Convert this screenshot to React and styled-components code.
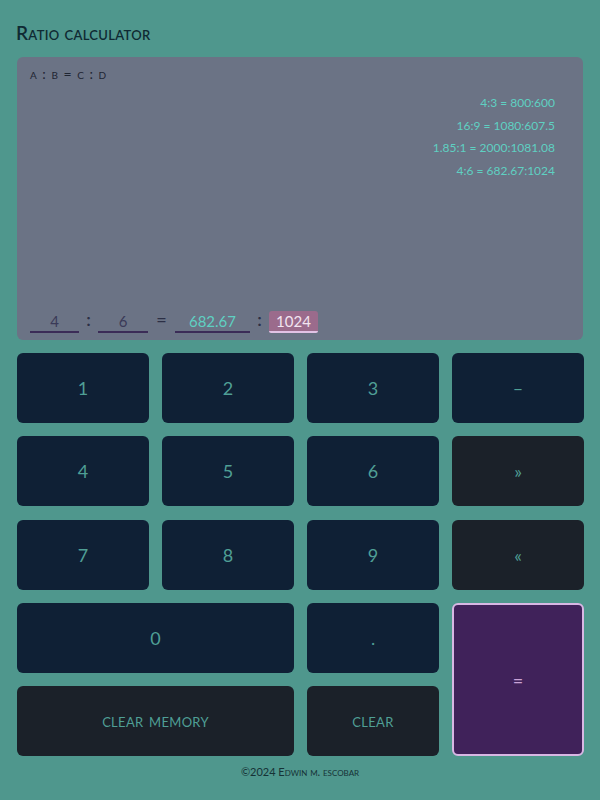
import React from "react";
import styled, { createGlobalStyle } from "styled-components";

const GlobalStyle = createGlobalStyle`
  html, body {
    margin: 0;
    padding: 0;
    background-color: #4f978d;
  }
  body {
    font-family: "Lato", "Open Sans", sans-serif;
  }
`;

const Page = styled.div`
  width: 600px;
  min-height: 800px;
  box-sizing: border-box;
  padding: 21px 17px 0 17px;
  display: flex;
  flex-direction: column;
`;

const Title = styled.h1`
  margin: 0 0 12px -1px;
  font-size: 19px;
  line-height: 24px;
  font-weight: 600;
  font-variant: small-caps;
  color: #0f2a33;
  letter-spacing: 0.3px;
`;

const Display = styled.div`
  height: 283px;
  box-sizing: border-box;
  background-color: #6b7385;
  border-radius: 6px;
  padding: 8px 28px 7px 13px;
  display: flex;
  flex-direction: column;
`;

const Formula = styled.div`
  font-size: 14px;
  line-height: 18px;
  font-variant: small-caps;
  color: #1f2533;
  word-spacing: 1px;
  letter-spacing: 0.5px;
`;

const History = styled.ul`
  list-style: none;
  margin: 12px 0 0 0;
  padding: 0;
  display: flex;
  flex-direction: column;
  align-items: flex-end;
  gap: 6.5px;
`;

const HistoryItem = styled.li`
  font-size: 12px;
  line-height: 16px;
  color: #5fd0c2;
`;

const InputRow = styled.div`
  margin-top: auto;
  display: flex;
  align-items: flex-end;
`;

const Field = styled.div`
  width: ${(p) => p.$w}px;
  height: 22px;
  box-sizing: border-box;
  text-align: center;
  font-size: 15px;
  line-height: 20px;
  color: ${(p) => p.$color};
  background-color: ${(p) => p.$bg || "transparent"};
  border-bottom: 2px solid ${(p) => p.$line};
  border-radius: ${(p) => (p.$bg ? "3px 3px 2px 2px" : "0")};
`;

const Sep = styled.span`
  width: ${(p) => p.$w}px;
  text-align: center;
  font-size: 18px;
  font-weight: 600;
  line-height: 22px;
  color: #2c2f45;
  padding-bottom: 3px;
`;

const Keypad = styled.div`
  margin-top: 13px;
  display: grid;
  grid-template-columns: repeat(4, 132px);
  grid-template-rows: repeat(5, 70px);
  column-gap: 13px;
  row-gap: 13.3px;
`;

const Key = styled.button`
  grid-column: ${(p) => p.$col || "auto"};
  grid-row: ${(p) => p.$row || "auto"};
  border: ${(p) => (p.$accent ? "2px solid #d8b7e4" : "none")};
  border-radius: 6px;
  background-color: ${(p) =>
    p.$accent ? "#40225a" : p.$muted ? "#1b2129" : "#0f2035"};
  color: ${(p) => (p.$accent ? "#c9a3d6" : "#4f9f95")};
  font-family: "Lato", "Open Sans", sans-serif;
  font-size: ${(p) => (p.$small ? "13px" : "18px")};
  letter-spacing: ${(p) => (p.$small ? "0.3px" : "0")};
  word-spacing: ${(p) => (p.$small ? "2px" : "0")};
  padding: ${(p) => (p.$small ? "2px 0 0 0" : "0")};
  display: flex;
  align-items: center;
  justify-content: center;
  cursor: pointer;
`;

const Footer = styled.footer`
  margin-top: 8px;
  text-align: center;
  font-size: 11px;
  line-height: 16px;
  font-variant: small-caps;
  color: #163236;
`;

const history = [
  "4:3 = 800:600",
  "16:9 = 1080:607.5",
  "1.85:1 = 2000:1081.08",
  "4:6 = 682.67:1024",
];

export default function App() {
  return (
    <Page>
      <GlobalStyle />
      <Title>Ratio calculator</Title>
      <Display>
        <Formula>a : b = c : d</Formula>
        <History>
          {history.map((h) => (
            <HistoryItem key={h}>{h}</HistoryItem>
          ))}
        </History>
        <InputRow>
          <Field $w={49} $color="#3a3a58" $line="#3b2c57">4</Field>
          <Sep $w={19}>:</Sep>
          <Field $w={50} $color="#3a3a58" $line="#3b2c57">6</Field>
          <Sep $w={27}>=</Sep>
          <Field $w={75} $color="#5fd0c2" $line="#3b2c57">682.67</Field>
          <Sep $w={19}>:</Sep>
          <Field $w={49} $color="#f2e4f0" $bg="#9b6b8c" $line="#e2c3e6">1024</Field>
        </InputRow>
      </Display>
      <Keypad>
        <Key>1</Key>
        <Key>2</Key>
        <Key>3</Key>
        <Key>–</Key>
        <Key>4</Key>
        <Key>5</Key>
        <Key>6</Key>
        <Key $muted>»</Key>
        <Key>7</Key>
        <Key>8</Key>
        <Key>9</Key>
        <Key $muted>«</Key>
        <Key $col="1 / 3">0</Key>
        <Key>.</Key>
        <Key $accent $col="4" $row="4 / 6">=</Key>
        <Key $muted $small $col="1 / 3">CLEAR MEMORY</Key>
        <Key $muted $small>CLEAR</Key>
      </Keypad>
      <Footer>©2024 Edwin m. escobar</Footer>
    </Page>
  );
}
